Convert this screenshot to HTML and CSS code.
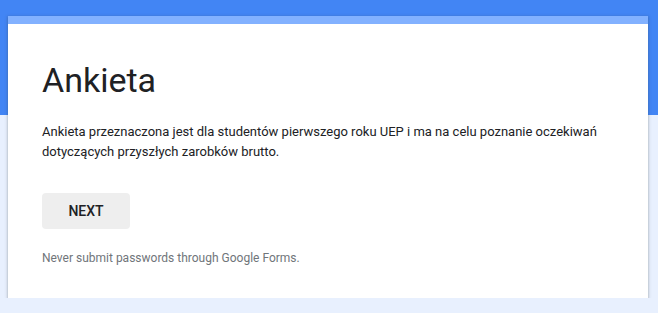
FILE: index.html
```html
<!DOCTYPE html>
<html lang="pl">
<head>
    <meta charset="UTF-8">
    <meta name="viewport" content="width=device-width, initial-scale=1.0">
    <title>Ankieta</title>
    <link rel="stylesheet" href="styles.css">
</head>
<body>
    <div class="page">
        <div class="form-card">
            <div class="card-stripe"></div>
            <div class="card-body">
                <h1 class="form-title">Ankieta</h1>
                <p class="form-description">Ankieta przeznaczona jest dla studentów pierwszego roku UEP i ma na celu poznanie oczekiwań dotyczących przyszłych zarobków brutto.</p>
                <button class="next-button">NEXT</button>
                <p class="form-note">Never submit passwords through Google Forms.</p>
            </div>
        </div>
    </div>
</body>
</html>
```

FILE: styles.css
```css
/* General Styles */
body {
    margin: 0;
    font-family: Roboto, "Liberation Sans", Arial, sans-serif;
    background-color: #e8f0fe;
    color: #202124;
}

.page {
    padding: 16px 10px 0 8px;
    background: linear-gradient(#4285f4 115px, #e8f0fe 115px);
}

/* Card */
.form-card {
    width: 640px;
    background-color: white;
    box-shadow: 0 1px 2px rgba(60, 64, 67, 0.3), 0 1px 3px 1px rgba(60, 64, 67, 0.15);
}

.card-stripe {
    height: 8px;
    background-color: #82b1ff;
}

.card-body {
    padding: 36px 34px 32px;
}

.form-title {
    margin: 0;
    font-size: 34px;
    font-weight: 400;
    line-height: 40px;
}

.form-description {
    margin: 22px 0 0;
    font-size: 13px;
    line-height: 20px;
}

.next-button {
    display: block;
    margin-top: 31px;
    width: 88px;
    height: 36px;
    border: none;
    border-radius: 4px;
    background-color: #eeeeee;
    color: #202124;
    font-family: inherit;
    font-size: 14px;
    font-weight: 500;
    cursor: pointer;
}

.form-note {
    margin: 21px 0 0;
    font-size: 12px;
    line-height: 16px;
    color: #70757a;
}
```
